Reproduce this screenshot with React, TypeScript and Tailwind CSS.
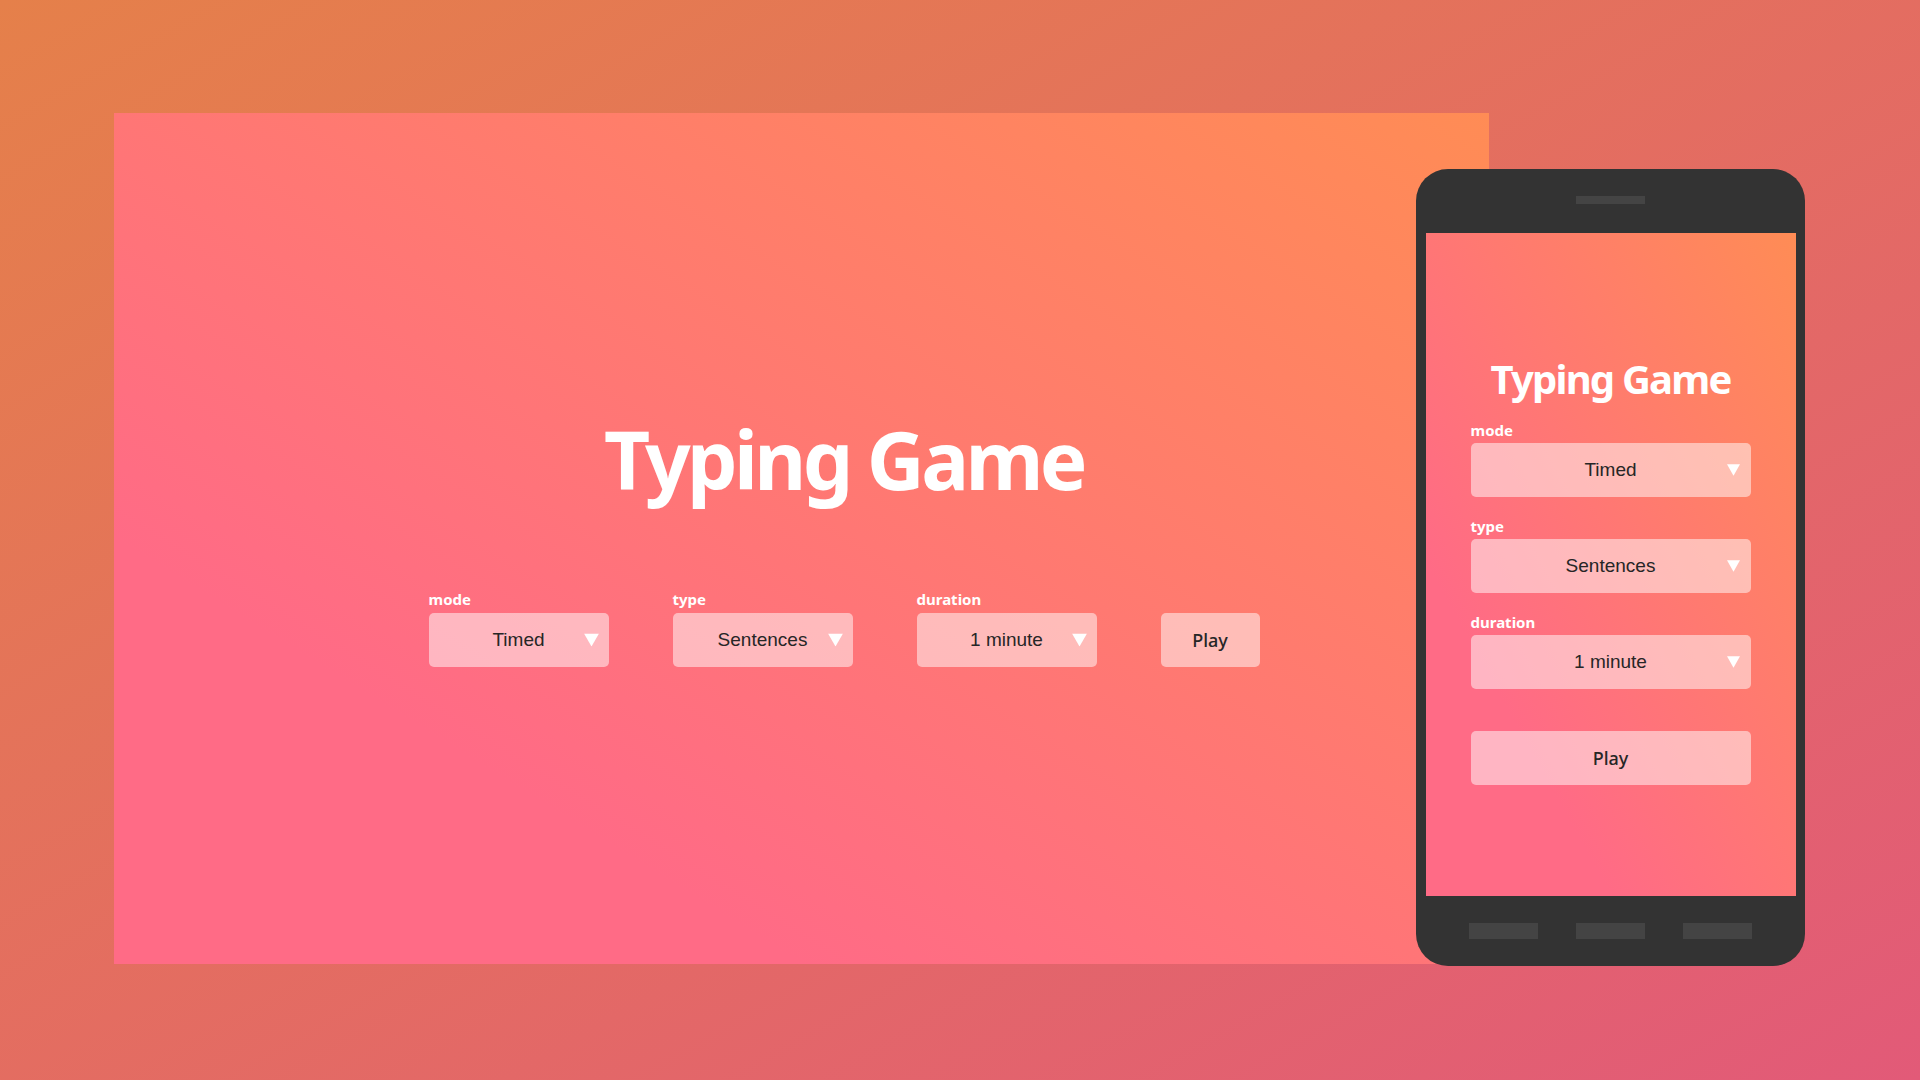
const fields = [
  { label: "mode", value: "Timed" },
  { label: "type", value: "Sentences" },
  { label: "duration", value: "1 minute" },
];

function Arrow({ small }: { small?: boolean }) {
  return (
    <svg
      className={
        small
          ? "absolute right-[11px] top-1/2 -translate-y-1/2"
          : "absolute right-[10px] top-1/2 -translate-y-1/2"
      }
      width={small ? 13 : 15}
      height={13}
      viewBox="0 0 15 13"
    >
      <polygon points="0,0 15,0 7.5,13" fill="#ffffff" />
    </svg>
  );
}

function Select({ value, wide }: { value: string; wide?: boolean }) {
  return (
    <div
      className={`relative flex h-[54px] items-center justify-center rounded-[5px] bg-white/50 text-[19px] text-[#262626] font-['Liberation_Sans',Arial,sans-serif] ${
        wide ? "w-[280px]" : "w-[180px]"
      }`}
    >
      {value}
      <Arrow small={wide} />
    </div>
  );
}

function Label({ text }: { text: string }) {
  return (
    <div className="text-[15px] leading-[19px] font-bold text-white font-['Noto_Sans',sans-serif]">
      {text}
    </div>
  );
}

function PlayButton({ wide }: { wide?: boolean }) {
  return (
    <button
      className={`flex h-[54px] items-center justify-center rounded-[5px] bg-white/50 text-[18px] font-medium text-[#262626] font-['Noto_Sans',sans-serif] ${
        wide ? "w-[280px]" : "w-[99px]"
      }`}
    >
      Play
    </button>
  );
}

function Desktop() {
  return (
    <div className="w-[1375px] h-[851px] overflow-hidden bg-[linear-gradient(to_top_right,#ff6b86_25%,#ff8c55_100%)]">
      <div className="w-[1460px] flex flex-col items-center pt-[306px]">
        <h1 className="text-[80px] leading-none font-bold tracking-[-0.045em] text-white font-['Noto_Sans',sans-serif]">
          Typing Game
        </h1>

        {/* Controls */}
        <div className="mt-[91px] flex items-end gap-[64px]">
          {fields.map((f) => (
            <div key={f.label} className="flex flex-col gap-[4px]">
              <Label text={f.label} />
              <Select value={f.value} />
            </div>
          ))}
          <PlayButton />
        </div>
      </div>
    </div>
  );
}

function Phone() {
  return (
    <div className="absolute left-[1416px] top-[169px] w-[389px] h-[797px] rounded-[32px] bg-[#333333] flex flex-col items-center">
      {/* Speaker */}
      <div className="mt-[27px] w-[69px] h-[8px] bg-[#444444]" />

      {/* Screen */}
      <div className="mt-[29px] w-[370px] h-[663px] bg-[linear-gradient(to_top_right,#ff6b86_25%,#ff8c55_100%)] flex flex-col items-center pt-[126px]">
        <h1 className="text-[40px] leading-none font-bold tracking-[-0.045em] text-white font-['Noto_Sans',sans-serif]">
          Typing Game
        </h1>

        <div className="mt-[22px] flex flex-col gap-[20px]">
          {fields.map((f) => (
            <div key={f.label} className="flex flex-col gap-[3px]">
              <Label text={f.label} />
              <Select value={f.value} wide />
            </div>
          ))}
          <div className="mt-[22px]">
            <PlayButton wide />
          </div>
        </div>
      </div>

      {/* Nav buttons */}
      <div className="mt-[27px] flex gap-[38px]">
        <div className="w-[69px] h-[16px] bg-[#444444]" />
        <div className="w-[69px] h-[16px] bg-[#444444]" />
        <div className="w-[69px] h-[16px] bg-[#444444]" />
      </div>
    </div>
  );
}

export default function App() {
  return (
    <div className="relative w-[1920px] h-[1080px] overflow-hidden bg-[linear-gradient(to_bottom_right,#e5804a,#e25a78)] pt-[113px] pl-[114px]">
      <Desktop />
      <Phone />
    </div>
  );
}
